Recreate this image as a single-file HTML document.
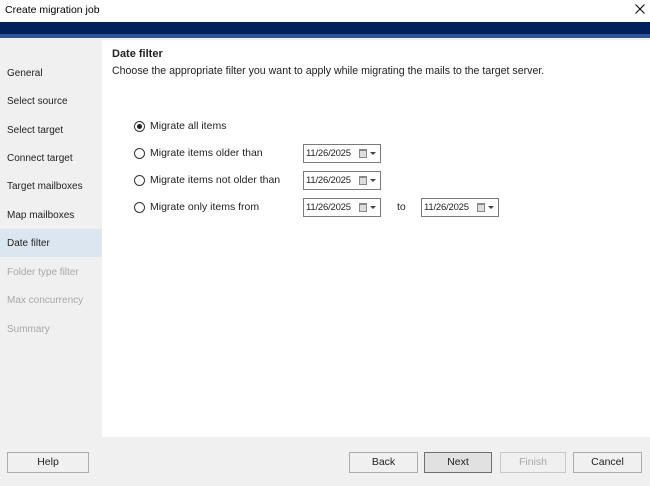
<!DOCTYPE html>
<html><head><style>
*{margin:0;padding:0;box-sizing:border-box}
body{width:650px;height:486px;background:#f0f0f0;font-family:"Liberation Sans",sans-serif;font-size:10.5px;color:#222;position:relative;overflow:hidden}
.a{position:absolute;white-space:nowrap}
.nav{position:absolute;left:0;width:102px;height:28px;padding-left:7px;line-height:30px;font-size:10px}
.dis{color:#a8a8a8}
.btn{position:absolute;top:452px;height:21px;border:1px solid #adadad;background:#f0f0f0;text-align:center;line-height:19px;font-size:10.5px}
.rad{position:absolute;left:134px;width:11px;height:11px;border:1px solid #333;border-radius:50%;background:#fff}
.dp{position:absolute;width:78px;height:19px;border:1px solid #7a7a7a;background:#fff;font-size:9.5px;line-height:17px;padding-left:2px;letter-spacing:-0.2px}
.dp i{position:absolute;right:13px;top:4px;width:8px;height:9px;border:1px solid #888;background:#ddd;border-top:2px solid #888}
.dp b{position:absolute;right:4px;top:7px;border-left:3px solid transparent;border-right:3px solid transparent;border-top:3px solid #444}
</style></head><body>
<div class="a" style="left:0;top:0;width:650px;height:22px;background:#fff"></div>
<div class="a" style="left:5px;top:4px;font-size:10.5px;color:#000">Create migration job</div>
<svg class="a" style="left:635px;top:4px" width="10" height="10"><path d="M0.5 0.5L9.5 9.5M9.5 0.5L0.5 9.5" stroke="#000" stroke-width="1"/></svg>
<div class="a" style="left:0;top:22px;width:650px;height:12px;background:#00205b"></div>
<div class="a" style="left:0;top:34px;width:650px;height:4px;background:#2f5597"></div>
<div class="a" style="left:102px;top:40px;width:548px;height:397px;background:#fff"></div>
<div class="nav" style="top:59px">General</div>
<div class="nav" style="top:87px">Select source</div>
<div class="nav" style="top:116px">Select target</div>
<div class="nav" style="top:144px">Connect target</div>
<div class="nav" style="top:172px">Target mailboxes</div>
<div class="nav" style="top:201px">Map mailboxes</div>
<div class="nav" style="top:229px;background:#dce6f1">Date filter</div>
<div class="nav dis" style="top:258px">Folder type filter</div>
<div class="nav dis" style="top:286px">Max concurrency</div>
<div class="nav dis" style="top:315px">Summary</div>
<div class="a" style="left:112px;top:48px;font-weight:bold;font-size:11px">Date filter</div>
<div class="a" style="left:112px;top:65px;font-size:10.6px">Choose the appropriate filter you want to apply while migrating the mails to the target server.</div>
<div class="rad" style="top:121px"><div style="position:absolute;left:2px;top:2px;width:5px;height:5px;border-radius:50%;background:#222"></div></div>
<div class="rad" style="top:148px"></div>
<div class="rad" style="top:175px"></div>
<div class="rad" style="top:202px"></div>
<div class="a" style="left:150px;top:120px">Migrate all items</div>
<div class="a" style="left:150px;top:147px">Migrate items older than</div>
<div class="a" style="left:150px;top:174px">Migrate items not older than</div>
<div class="a" style="left:150px;top:201px">Migrate only items from</div>
<div class="dp" style="left:303px;top:144px">11/26/2025<i></i><b></b></div>
<div class="dp" style="left:303px;top:171px">11/26/2025<i></i><b></b></div>
<div class="dp" style="left:303px;top:198px">11/26/2025<i></i><b></b></div>
<div class="a" style="left:397px;top:201px">to</div>
<div class="dp" style="left:421px;top:198px">11/26/2025<i></i><b></b></div>
<div class="btn" style="left:7px;width:82px">Help</div>
<div class="btn" style="left:349px;width:69px">Back</div>
<div class="btn" style="left:424px;width:68px;background:#e1e1e1;border:1px solid #707070">Next</div>
<div class="btn dis" style="left:500px;width:66px;border-color:#c8c8c8">Finish</div>
<div class="btn" style="left:573px;width:69px">Cancel</div>
</body></html>
